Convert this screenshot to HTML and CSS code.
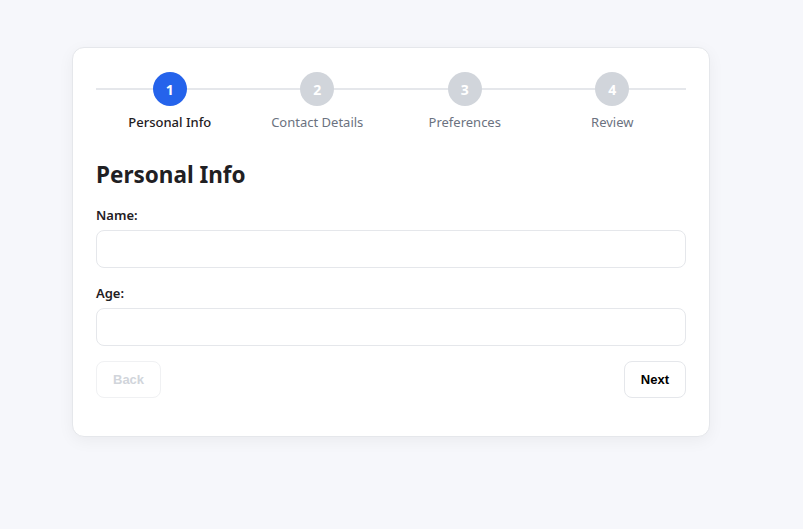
FILE: index.html
```html
<!DOCTYPE html>
<html>
<head>
<meta charset="utf-8">
<link rel="stylesheet" href="styles.css">
</head>
<body>
<div class="card">
  <div class="stepper">
    <div class="line"></div>
    <div class="step active"><div class="circle">1</div><div class="label">Personal Info</div></div>
    <div class="step"><div class="circle">2</div><div class="label">Contact Details</div></div>
    <div class="step"><div class="circle">3</div><div class="label">Preferences</div></div>
    <div class="step"><div class="circle">4</div><div class="label">Review</div></div>
  </div>
  <h2 class="title">Personal Info</h2>
  <div class="field">
    <label class="flabel">Name:</label>
    <input class="input" type="text">
  </div>
  <div class="field">
    <label class="flabel">Age:</label>
    <input class="input" type="text">
  </div>
  <div class="actions">
    <button class="btn" disabled>Back</button>
    <button class="btn">Next</button>
  </div>
</div>
</body>
</html>
```
FILE: styles.css
```css
html, body { margin: 0; padding: 0; }
body {
  background: #f6f7fb;
  font-family: "Noto Sans", "Open Sans", sans-serif;
  color: #1f2023;
  width: 803px;
  height: 529px;
}
.card {
  margin: 47px 0 0 72px;
  width: 638px;
  height: 390px;
  box-sizing: border-box;
  background: #fff;
  border: 1px solid #e5e7eb;
  border-radius: 12px;
  padding: 24px 23px;
  box-shadow: 0 4px 16px rgba(0,0,0,0.05);
}
.stepper {
  position: relative;
  display: grid;
  grid-template-columns: repeat(4, 1fr);
}
.line {
  position: absolute;
  left: 0; right: 0;
  top: 16px;
  height: 2px;
  background: #e5e7eb;
}
.step {
  position: relative;
  display: flex;
  flex-direction: column;
  align-items: center;
}
.circle {
  width: 34px; height: 34px;
  border-radius: 50%;
  background: #d1d5db;
  color: #fff;
  font-weight: 700;
  font-size: 14px;
  display: flex; align-items: center; justify-content: center;
}
.step.active .circle { background: #2563eb; }
.label {
  margin-top: 7px;
  font-size: 13px;
  line-height: 18px;
  color: #6b7280;
}
.step.active .label { color: #1f2023; font-weight: 500; }
.title {
  margin: 29px 0 0;
  font-size: 22.5px;
  line-height: 30px;
  font-weight: 700;
}
.field { margin-top: 16px; }
.field + .field { margin-top: 16px; }
.flabel {
  display: block;
  font-size: 13px;
  line-height: 18px;
  font-weight: 600;
  margin-bottom: 6px;
}
.input {
  display: block;
  width: 100%;
  box-sizing: border-box;
  height: 38px;
  border: 1px solid #e5e7eb;
  border-radius: 8px;
  background: #fff;
  outline: none;
}
.actions {
  margin-top: 15px;
  display: flex;
  justify-content: space-between;
}
.btn {
  height: 37px;
  padding: 0 16px;
  background: #fff;
  border: 1px solid #e5e7eb;
  border-radius: 8px;
  font-family: "Liberation Sans", Arial, sans-serif;
  font-weight: 700;
  font-size: 13px;
  color: #000;
}
.btn:disabled { color: #d1d5db; border-color: #f0f1f3; }
```
